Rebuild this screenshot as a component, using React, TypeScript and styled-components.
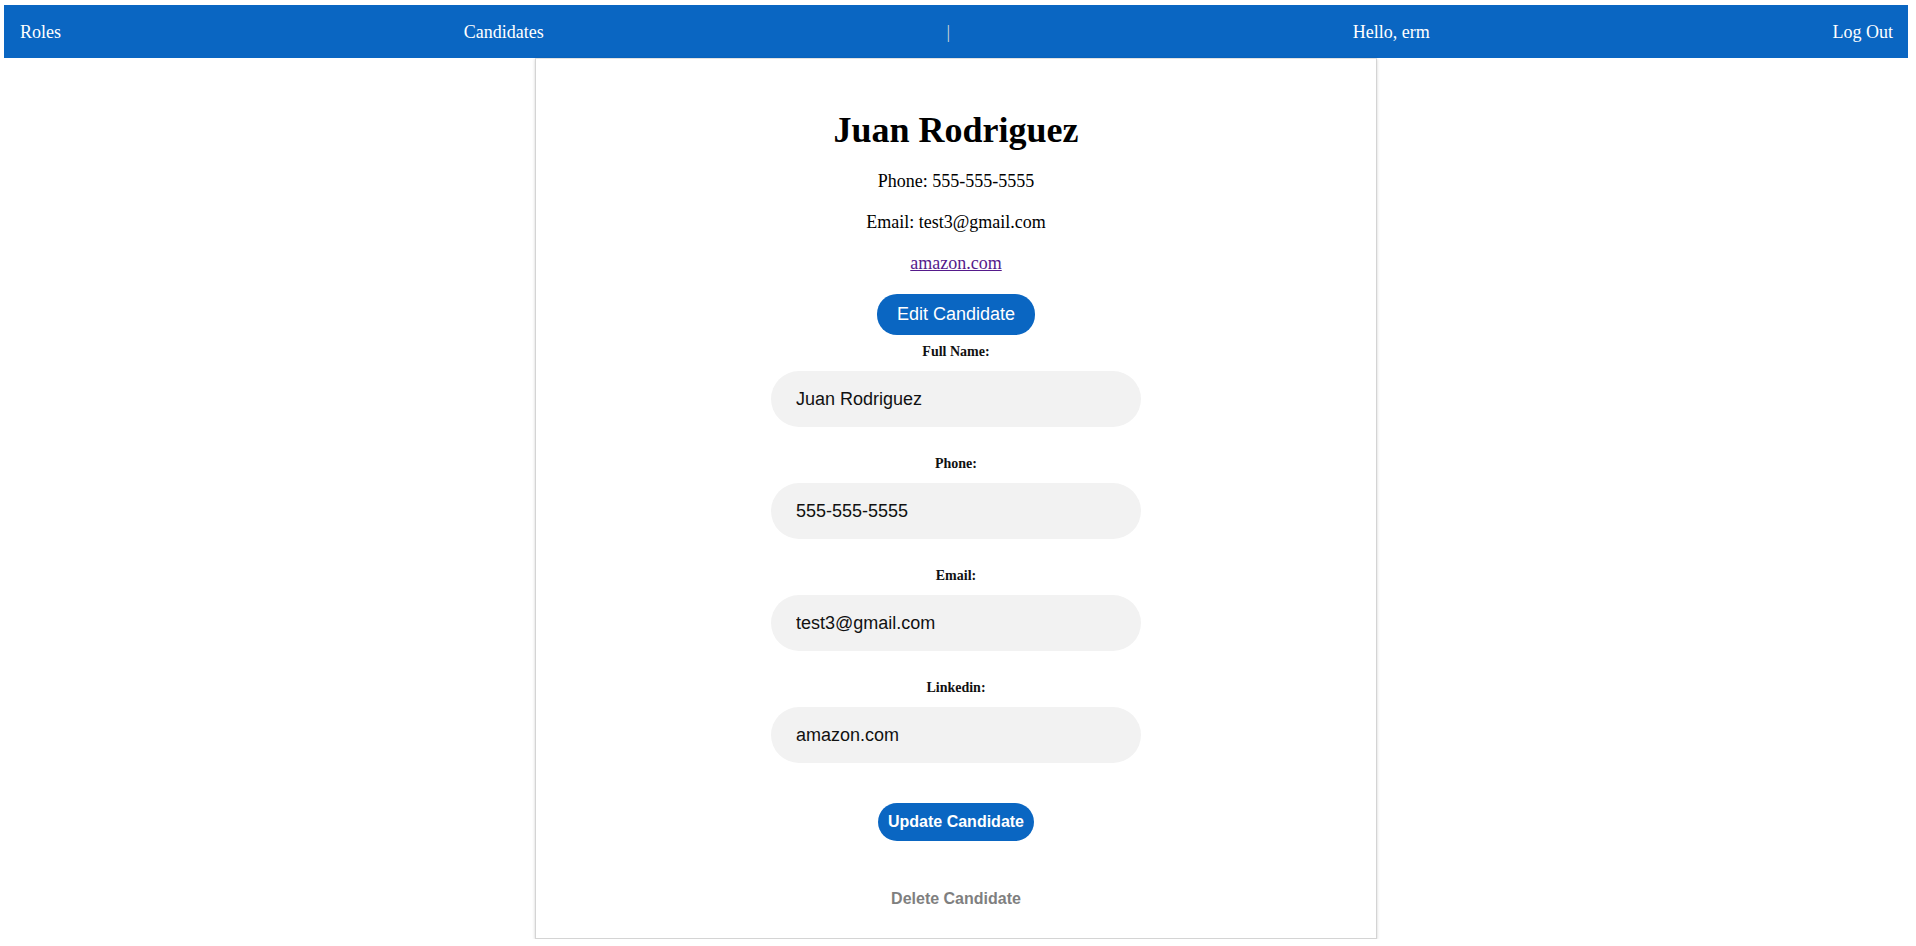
import React from "react";
import styled, { createGlobalStyle } from "styled-components";

const GlobalStyle = createGlobalStyle`
  html, body { margin: 0; padding: 0; background: #ffffff; }
  body {
    font-family: "Liberation Serif", "Times New Roman", serif;
    font-size: 18px;
    color: #000;
  }
  #root { padding: 5px 8px 0 4px; }
`;

const NavBar = styled.nav`
  display: flex;
  align-items: center;
  justify-content: space-between;
  height: 53px;
  padding: 0 15px 0 16px;
  background: #0a66c2;
  box-sizing: border-box;
`;

const NavItem = styled.span<{ $muted?: boolean }>`
  font-family: "Liberation Serif", "Times New Roman", serif;
  font-size: 18px;
  line-height: 20px;
  color: ${(p) => (p.$muted ? "#d6d6d6" : "#ffffff")};
  cursor: pointer;
`;

const Card = styled.main`
  width: 842px;
  margin: 0 auto;
  box-sizing: border-box;
  border: 1px solid #d4d4d4;
  border-top-color: #e2e2e2;
  box-shadow: 0 1px 3px rgba(0, 0, 0, 0.18);
  background: #fff;
  display: flex;
  flex-direction: column;
  align-items: center;
  padding: 51px 0 20px;
`;

const Title = styled.h1`
  margin: 0;
  font-family: "Liberation Serif", "Times New Roman", serif;
  font-size: 36px;
  line-height: 40px;
  font-weight: 700;
`;

const Info = styled.p`
  margin: 21px 0 0;
  font-size: 18px;
  line-height: 20px;
`;

const ProfileLink = styled.a`
  display: block;
  margin-top: 21px;
  font-size: 18px;
  line-height: 20px;
  color: #551a8b;
  text-decoration: underline;
`;

const PillButton = styled.button<{ $bold?: boolean }>`
  border: none;
  background: #0a66c2;
  color: #fff;
  font-family: "Liberation Sans", Arial, sans-serif;
  font-size: ${(p) => (p.$bold ? "16px" : "18px")};
  font-weight: ${(p) => (p.$bold ? 700 : 400)};
  line-height: ${(p) => (p.$bold ? "18px" : "21px")};
  padding: ${(p) => (p.$bold ? "10px 10px" : "10px 20px")};
  border-radius: 20px;
  cursor: pointer;
`;

const EditButton = styled(PillButton)`
  margin-top: 21px;
`;

const UpdateButton = styled(PillButton)`
  margin-top: 40px;
`;

const Form = styled.form`
  display: flex;
  flex-direction: column;
  align-items: center;
  margin-top: 9px;
`;

const Field = styled.div<{ $first?: boolean }>`
  display: flex;
  flex-direction: column;
  align-items: center;
  margin-top: ${(p) => (p.$first ? "0" : "29px")};
`;

const Label = styled.label`
  font-family: "Liberation Serif", "Times New Roman", serif;
  font-size: 14px;
  line-height: 15px;
  font-weight: 700;
  color: #111;
`;

const Input = styled.input`
  margin-top: 12px;
  width: 370px;
  height: 56px;
  box-sizing: border-box;
  border: none;
  outline: none;
  border-radius: 28px;
  background: #f2f2f2;
  padding: 0 24px 0 25px;
  font-family: "Liberation Sans", Arial, sans-serif;
  font-size: 18px;
  color: #111;
`;

const DeleteButton = styled.button`
  margin-top: 39px;
  border: none;
  background: transparent;
  color: #7f7f7f;
  font-family: "Liberation Sans", Arial, sans-serif;
  font-size: 16px;
  font-weight: 700;
  line-height: 18px;
  padding: 10px;
  cursor: pointer;
`;

const fields = [
  { label: "Full Name:", value: "Juan Rodriguez" },
  { label: "Phone:", value: "555-555-5555" },
  { label: "Email:", value: "test3@gmail.com" },
  { label: "Linkedin:", value: "amazon.com" },
];

export default function App() {
  return (
    <>
      <GlobalStyle />
      <NavBar>
        <NavItem>Roles</NavItem>
        <NavItem>Candidates</NavItem>
        <NavItem $muted>|</NavItem>
        <NavItem>Hello, erm</NavItem>
        <NavItem>Log Out</NavItem>
      </NavBar>
      <Card>
        <Title>Juan Rodriguez</Title>
        <Info>Phone: 555-555-5555</Info>
        <Info>Email: test3@gmail.com</Info>
        <ProfileLink href="#">amazon.com</ProfileLink>
        <EditButton type="button">Edit Candidate</EditButton>
        <Form onSubmit={(e) => e.preventDefault()}>
          {fields.map((f, i) => (
            <Field key={f.label} $first={i === 0}>
              <Label>{f.label}</Label>
              <Input defaultValue={f.value} />
            </Field>
          ))}
          <UpdateButton $bold type="submit">
            Update Candidate
          </UpdateButton>
        </Form>
        <DeleteButton type="button">Delete Candidate</DeleteButton>
      </Card>
    </>
  );
}
